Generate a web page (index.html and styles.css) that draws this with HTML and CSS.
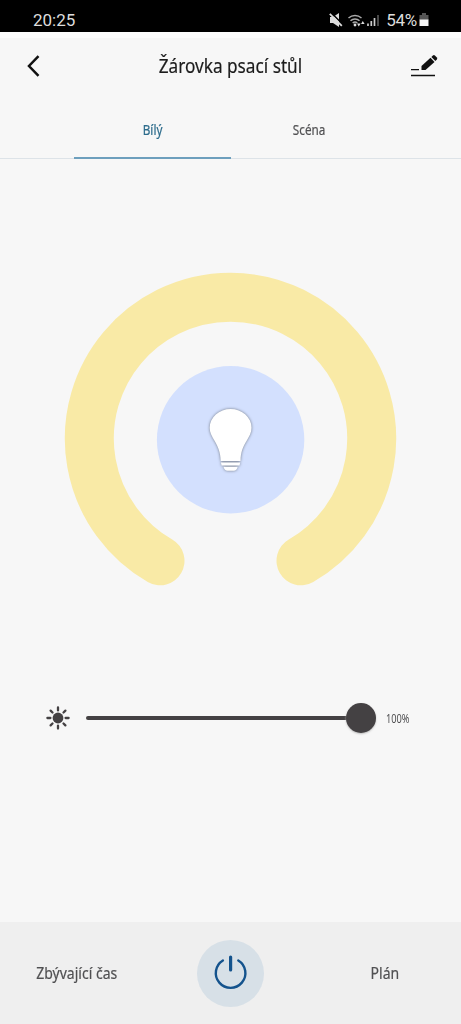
FILE: index.html
```html
<!DOCTYPE html>
<html lang="cs">
<head>
<meta charset="utf-8">
<title>Žárovka psací stůl</title>
<link rel="stylesheet" href="styles.css">
</head>
<body>
<div class="status">
  <span class="clock">20:25</span>
  <svg class="status-icons" width="56" height="18" viewBox="0 0 56 18">
    <path d="M1 6h3l6-4v14l-6-4H1z" fill="#ddd"/>
    <path d="M2 1.500l12 12" stroke="#000" stroke-width="1.500"/>
    <path d="M.8 2.800l12 12" stroke="#ddd" stroke-width="1.800"/>
    <g fill="none" stroke="#aaa" stroke-width="1.500">
      <path d="M19.500 7a10 10 0 0 1 13 0M21.500 9.800a6.500 6.500 0 0 1 9 0M23.700 12a3.500 3.500 0 0 1 4.600 0"/>
    </g>
    <circle cx="26" cy="14" r="1.400" fill="#ddd"/>
    <path d="M28 12.500h3.600L29.800 15.500zM32 13h3.600L33.800 10z" fill="#ddd"/>
    <path d="M39 15v-2.500M42.300 15v-5" stroke="#ccc" stroke-width="1.700"/>
    <path d="M45.500 15V7" stroke="#ccc" stroke-width="1.700"/>
    <path d="M49 15V4" stroke="#555" stroke-width="1.700"/>
  </svg>
  <span class="percent">54%</span>
  <svg class="battery" width="10" height="14" viewBox="0 0 10 14">
    <path d="M3 0h4v2H3zM.5 2h9v5h-9z" fill="#555"/>
    <path d="M.5 6.500h9V13h-9z" fill="#f4f4f4"/>
  </svg>
</div>
<header class="bar">
  <svg class="back" width="16" height="24" viewBox="0 0 16 24"><path d="M13.500 2.200L4 12l9.500 9.800" fill="none" stroke="#111" stroke-width="2.500"/></svg>
  <h1 class="title"><span class="cond">Žárovka psací stůl</span></h1>
  <svg class="edit" width="30" height="24" viewBox="0 0 30 24">
    <path d="M2 15.600h8M2 21.500h24" stroke="#111" stroke-width="1.400"/>
    <path d="M12.500 16v-4L21.500 3.800l4 4.200-9 8z" fill="#111"/>
    <path d="M22.400 2.900l1.500-1.400q1-.8 2 0l2 2q.8 1-.1 2l-1.400 1.500z" fill="#111"/>
  </svg>
</header>
<nav class="tabs">
  <div class="tab active"><span class="cond">Bílý</span></div>
  <div class="tab"><span class="cond">Scéna</span></div>
</nav>
<main class="panel">
  <svg class="dial" width="340" height="320" viewBox="61 269 340 320">
    <path d="M160 560.800A141.200 141.200 0 1 1 301 560.800" fill="none" stroke="#f9eaa6" stroke-width="49" stroke-linecap="round"/>
    <circle cx="230.600" cy="439.800" r="73.700" fill="#d3e0fe"/>
    <g class="bulb">
      <path d="M220.700 461c-.2-9-2.500-13.500-6-20-3-5-5-8.300-5-13.200a20.900 18.800 0 0 1 41.800 0c0 5-2.200 8.400-5 13.200-3.800 6.500-5.800 11-6 20z"/>
      <path d="M220.900 462.400h19.300l-.7 3h-17.900z"/>
      <path d="M223.500 466.700h14.200q-1 4-4 4h-6.200q-3 0-4-4z"/>
    </g>
  </svg>
  <div class="slider">
    <svg class="sun" width="24" height="24" viewBox="0 0 24 24">
      <circle cx="12" cy="12" r="5.400" fill="#444143"/>
      <path d="M12 1.400v3M12 19.600v3M1.400 12h3M19.600 12h3M4.600 4.600l1.900 1.900M17.500 17.500l1.900 1.900M4.600 19.400l1.900-1.900M17.500 6.500l1.900-1.900" stroke="#444143" stroke-width="2.300" stroke-linecap="round"/>
    </svg>
    <div class="track"><div class="knob"></div></div>
    <span class="value cond">100%</span>
  </div>
</main>
<footer class="footer">
  <div class="action timer"><span class="cond">Zbývající čas</span></div>
  <div class="power">
    <svg width="36" height="36" viewBox="0 0 36 36">
      <path d="M9.900 5.400a14.800 14.800 0 1 0 15.400 0" fill="none" stroke="#14538d" stroke-width="2.400" stroke-linecap="round"/>
      <path d="M17.600 2v13" stroke="#14538d" stroke-width="3.200" stroke-linecap="round"/>
    </svg>
  </div>
  <div class="action plan"><span class="cond">Plán</span></div>
</footer>
</body>
</html>
```
FILE: styles.css
```css
* { box-sizing: border-box; }
body {
  margin: 0;
  width: 461px;
  height: 1024px;
  display: flex;
  flex-direction: column;
  background: #f7f7f7;
  color: #505052;
  font-family: "Noto Sans", sans-serif;
  overflow: hidden;
}
svg { display: block; flex: none; }
.cond { display: inline-block; white-space: nowrap; transform: scaleX(.85); -webkit-text-stroke: .2px currentColor; }
.status {
  height: 32px;
  flex: none;
  display: flex;
  align-items: center;
  padding: 8px 32px 0 33px;
  background: #000;
  color: #ddd;
  font: 17px/24px Roboto, sans-serif;
}
.status-icons { margin-left: auto; }
.percent { margin-left: 1px; font-size: 17px; letter-spacing: -.3px; }
.battery { margin-left: 2px; }
.bar {
  height: 69px;
  flex: none;
  display: grid;
  grid-template-columns: 1fr auto 1fr;
  align-items: center;
  padding: 0 22px 7px;
  border-top: 6px solid #fdfdfd;
}
.back { margin-left: 3px; }
.edit { justify-self: end; }
.title { margin: 0; font-size: 20px; font-weight: 400; line-height: 26px; color: #1c1c1c; }
.title .cond { transform: scaleX(.86); }
.tabs {
  height: 58px;
  flex: none;
  display: flex;
  padding: 0 74px;
  border-bottom: 1px solid #dde3e8;
}
.tab {
  width: 157px;
  height: 58px;
  font-size: 13.800px;
  line-height: 58px;
  text-align: center;
}
.tab.active { color: #2d6c8c; border-bottom: 2px solid #6d9fbd; }
.panel { flex: 1; display: flex; flex-direction: column; align-items: center; padding-top: 110px; }
.bulb { fill: #fff; filter: drop-shadow(0 0 1.500px #707784); }
.slider { align-self: stretch; display: flex; align-items: center; height: 32px; margin-top: 113px; padding-left: 46px; }
.track {
  width: 290px;
  height: 4px;
  margin-left: 16px;
  display: flex;
  align-items: center;
  justify-content: flex-end;
  border-radius: 2px;
  background: #444143;
}
.knob { width: 30px; height: 30px; border-radius: 50%; background: #444143; box-shadow: 0 1px 2px #bbb; }
.value { margin-left: 10px; font-size: 12px; transform: scaleX(.77); transform-origin: left; -webkit-text-stroke: 0; }
.footer {
  height: 102px;
  flex: none;
  display: grid;
  grid-template-columns: 153px 155px 153px;
  align-items: center;
  justify-items: center;
  background: #efefef;
}
.action { font-size: 16.500px; line-height: 24px; }
.power {
  width: 67px;
  height: 67px;
  display: flex;
  align-items: center;
  justify-content: center;
  border-radius: 50%;
  background: #d7e0e7;
}
```
